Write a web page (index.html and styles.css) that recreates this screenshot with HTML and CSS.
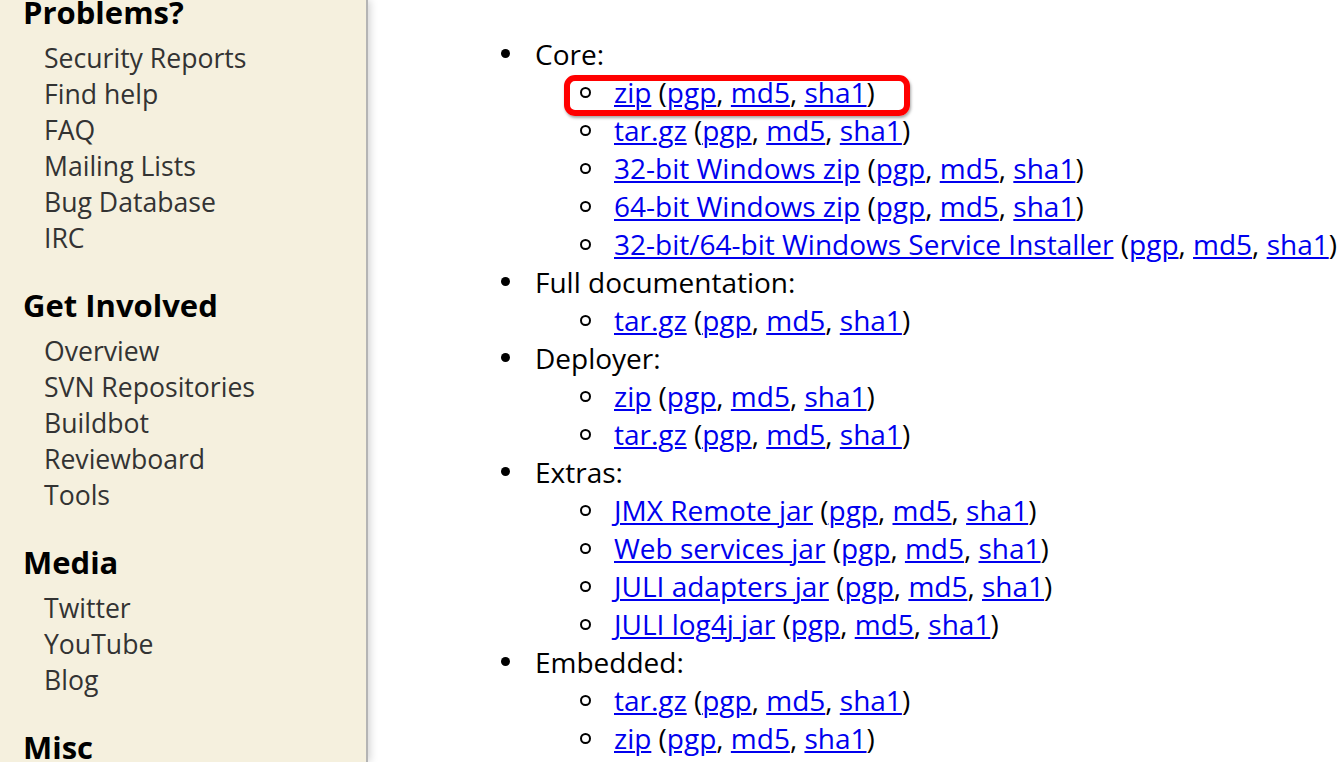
FILE: index.html
```html
<!DOCTYPE html>
<html>
<head>
<meta charset="utf-8">
<link rel="stylesheet" href="styles.css">
</head>
<body>
<div class="page">
  <nav class="sidebar">
    <section class="group first">
      <h2>Problems?</h2>
      <ul>
        <li>Security Reports</li>
        <li>Find help</li>
        <li>FAQ</li>
        <li>Mailing Lists</li>
        <li>Bug Database</li>
        <li>IRC</li>
      </ul>
    </section>
    <section class="group">
      <h2>Get Involved</h2>
      <ul>
        <li>Overview</li>
        <li>SVN Repositories</li>
        <li>Buildbot</li>
        <li>Reviewboard</li>
        <li>Tools</li>
      </ul>
    </section>
    <section class="group">
      <h2>Media</h2>
      <ul>
        <li>Twitter</li>
        <li>YouTube</li>
        <li>Blog</li>
      </ul>
    </section>
    <section class="group">
      <h2>Misc</h2>
    </section>
  </nav>
  <main class="content">
    <ul class="dl">
      <li>Core:
        <ul>
          <li class="hl"><span class="box"></span><a href="#">zip</a> (<a href="#">pgp</a>, <a href="#">md5</a>, <a href="#">sha1</a>)</li>
          <li><a href="#">tar.gz</a> (<a href="#">pgp</a>, <a href="#">md5</a>, <a href="#">sha1</a>)</li>
          <li><a href="#">32-bit Windows zip</a> (<a href="#">pgp</a>, <a href="#">md5</a>, <a href="#">sha1</a>)</li>
          <li><a href="#">64-bit Windows zip</a> (<a href="#">pgp</a>, <a href="#">md5</a>, <a href="#">sha1</a>)</li>
          <li><a href="#">32-bit/64-bit Windows Service Installer</a> (<a href="#">pgp</a>, <a href="#">md5</a>, <a href="#">sha1</a>)</li>
        </ul>
      </li>
      <li>Full documentation:
        <ul>
          <li><a href="#">tar.gz</a> (<a href="#">pgp</a>, <a href="#">md5</a>, <a href="#">sha1</a>)</li>
        </ul>
      </li>
      <li>Deployer:
        <ul>
          <li><a href="#">zip</a> (<a href="#">pgp</a>, <a href="#">md5</a>, <a href="#">sha1</a>)</li>
          <li><a href="#">tar.gz</a> (<a href="#">pgp</a>, <a href="#">md5</a>, <a href="#">sha1</a>)</li>
        </ul>
      </li>
      <li>Extras:
        <ul>
          <li><a href="#">JMX Remote jar</a> (<a href="#">pgp</a>, <a href="#">md5</a>, <a href="#">sha1</a>)</li>
          <li><a href="#">Web services jar</a> (<a href="#">pgp</a>, <a href="#">md5</a>, <a href="#">sha1</a>)</li>
          <li><a href="#">JULI adapters jar</a> (<a href="#">pgp</a>, <a href="#">md5</a>, <a href="#">sha1</a>)</li>
          <li><a href="#">JULI log4j jar</a> (<a href="#">pgp</a>, <a href="#">md5</a>, <a href="#">sha1</a>)</li>
        </ul>
      </li>
      <li>Embedded:
        <ul>
          <li><a href="#">tar.gz</a> (<a href="#">pgp</a>, <a href="#">md5</a>, <a href="#">sha1</a>)</li>
          <li><a href="#">zip</a> (<a href="#">pgp</a>, <a href="#">md5</a>, <a href="#">sha1</a>)</li>
        </ul>
      </li>
    </ul>
  </main>
</div>
</body>
</html>
```
FILE: styles.css
```css
html, body {
  margin: 0;
  padding: 0;
  background: #ffffff;
  height: 100%;
  overflow: hidden;
}
body {
  font-family: "Open Sans", "Liberation Sans", sans-serif;
}
.page {
  display: flex;
  height: 762px;
}
.sidebar {
  width: 368px;
  flex: none;
  background: #f5f0de;
  border-right: 2px solid #b4b4b4;
  box-shadow: 2px 0 8px rgba(0, 0, 0, 0.18);
  padding-left: 23px;
  box-sizing: border-box;
  position: relative;
  z-index: 1;
}
.group h2 {
  margin: 0;
  font-size: 31px;
  font-weight: 700;
  line-height: 40px;
  color: #000;
  white-space: nowrap;
}
.group.first {
  margin-top: -8px;
}
.group {
  margin-bottom: 29px;
}
.group ul {
  list-style: none;
  margin: 8px 0 0;
  padding: 0 0 0 21px;
}
.group li {
  font-size: 26.6px;
  line-height: 36px;
  color: #333;
  white-space: nowrap;
}
.content {
  flex: 1;
  padding-top: 35px;
  padding-left: 131px;
}
.dl, .dl ul {
  list-style: none;
  margin: 0;
  padding: 0;
}
.dl li {
  white-space: nowrap;
}
.dl > li {
  position: relative;
  padding-left: 36px;
  font-size: 28px;
  line-height: 38px;
  color: #000;
}
.dl > li::before {
  content: "";
  position: absolute;
  left: 2px;
  top: 14px;
  width: 9px;
  height: 9px;
  border-radius: 50%;
  background: #000;
}
.dl ul {
  padding-left: 79px;
}
.dl ul li {
  position: relative;
}
.dl ul li::before {
  content: "";
  position: absolute;
  left: -34px;
  top: 14px;
  width: 7px;
  height: 7px;
  border: 2px solid #000;
  border-radius: 50%;
}
.dl a {
  color: #0000ee;
  text-decoration: underline;
  text-decoration-thickness: 2px;
  text-underline-offset: 2px;
}
.box {
  position: absolute;
  left: -50px;
  top: 2px;
  width: 346px;
  height: 41px;
  box-sizing: border-box;
  border: 6px solid #ff0000;
  border-radius: 11px;
  box-shadow: 1px 2px 3px rgba(0, 0, 0, 0.35);
}
```
